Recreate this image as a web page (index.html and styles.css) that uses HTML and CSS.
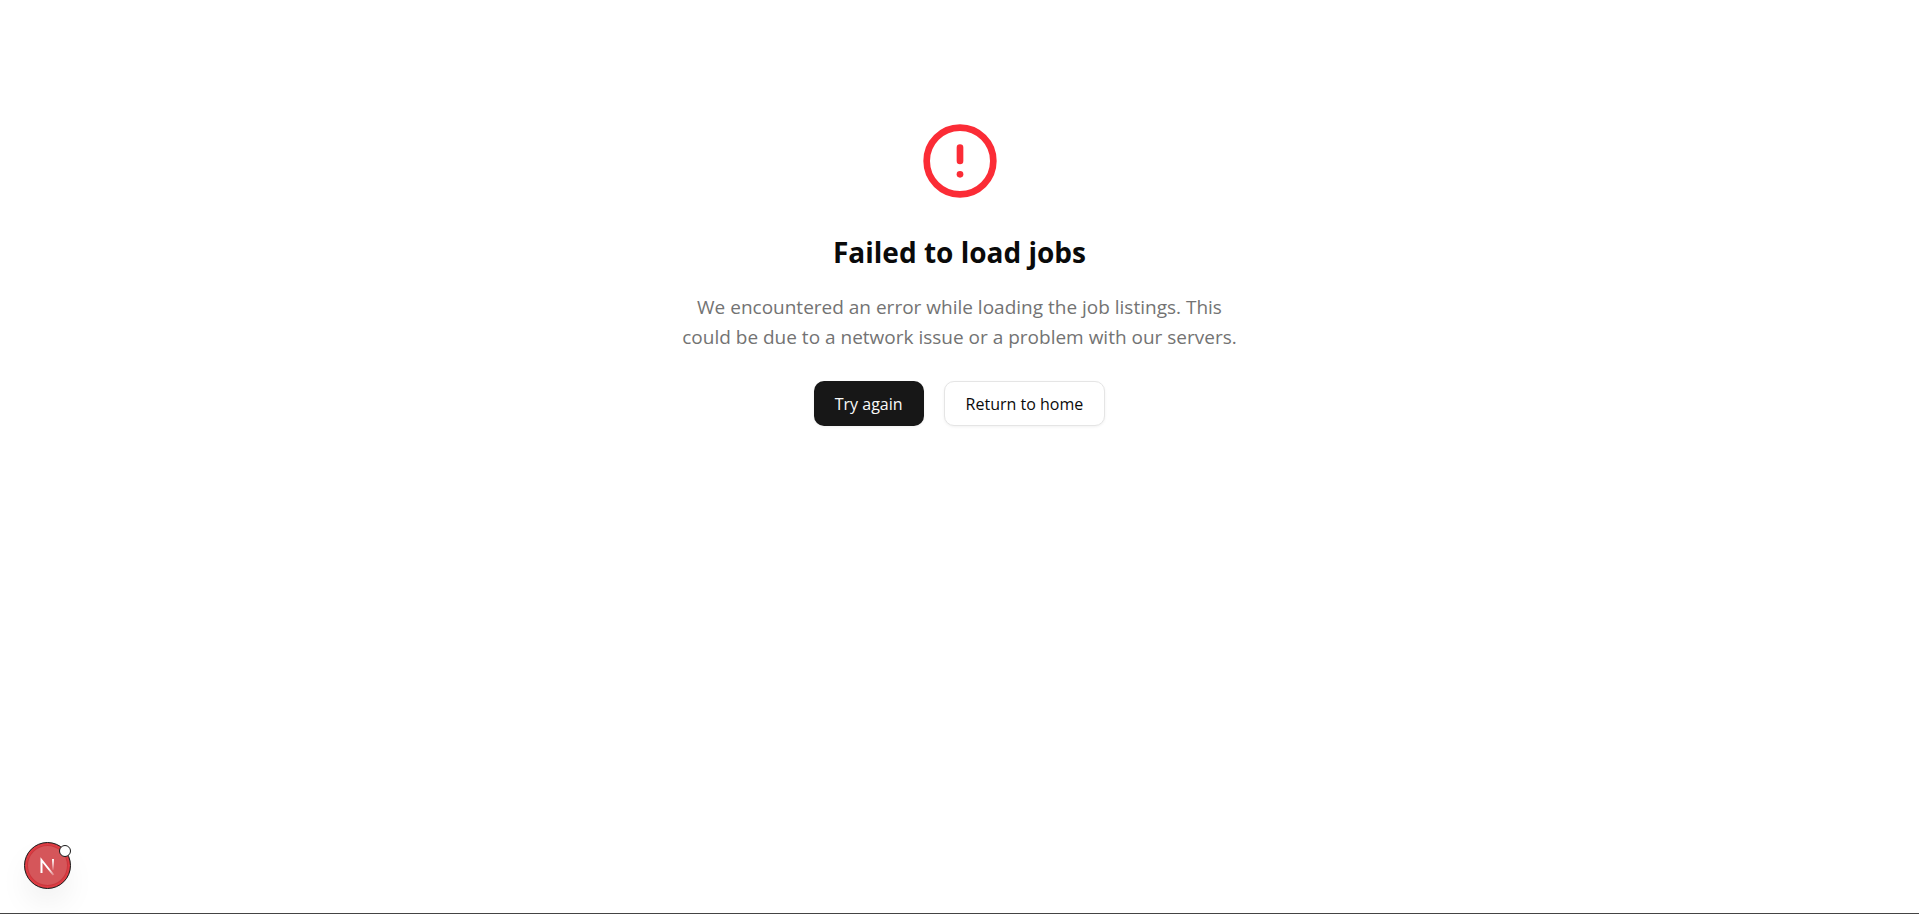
FILE: index.html
```html
<!DOCTYPE html>
<html lang="en">
<head>
<meta charset="utf-8">
<meta name="viewport" content="width=device-width, initial-scale=1">
<title>Failed to load jobs</title>
<link rel="stylesheet" href="styles.css">
</head>
<body>
<main class="error">
  <svg class="error-icon" viewBox="0 0 24 24" aria-hidden="true">
    <circle cx="12" cy="12" r="10"/>
    <line x1="12" y1="8" x2="12" y2="12"/>
    <line x1="12" y1="16" x2="12.01" y2="16"/>
  </svg>
  <h1 class="error-title">Failed to load jobs</h1>
  <p class="error-text">We encountered an error while loading the job listings. This could be due to a network issue or a problem with our servers.</p>
  <div class="actions">
    <button class="button button-primary" type="button">Try again</button>
    <a class="button button-outline" href="/">Return to home</a>
  </div>
</main>
<button class="dev-badge" type="button" aria-label="Open developer tools">
  <svg class="dev-logo" viewBox="0 0 45 45" fill="none" aria-hidden="true">
    <defs>
      <linearGradient id="fade-diagonal" gradientUnits="userSpaceOnUse" x1="24" y1="26" x2="30" y2="34"><stop stop-color="#fff"/><stop offset="1" stop-color="#fff" stop-opacity="0"/></linearGradient>
      <linearGradient id="fade-stem" gradientUnits="userSpaceOnUse" x1="28" y1="16" x2="28" y2="28"><stop stop-color="#fff"/><stop offset="1" stop-color="#fff" stop-opacity="0"/></linearGradient>
    </defs>
    <path d="M16.500 30V17L28.500 32" stroke="url(#fade-diagonal)" stroke-width="2"/>
    <path d="M28 16V27" stroke="url(#fade-stem)" stroke-width="2"/>
  </svg>
  <span class="dev-dot"></span>
</button>
</body>
</html>
```
FILE: styles.css
```css
* { box-sizing: border-box; }
body {
  margin: 0;
  min-height: 100vh;
  background: #fff;
  color: #0a0a0a;
  border-bottom: 1px solid #444;
  font-family: "Segoe UI", "Open Sans", "Noto Sans", sans-serif;
}
.error {
  display: flex;
  flex-direction: column;
  align-items: center;
  padding: 121px 20px 80px;
  text-align: center;
}
.error-icon {
  width: 80px;
  height: 80px;
  margin-bottom: 31px;
  fill: none;
  stroke: #fb2c36;
  stroke-width: 2;
  stroke-linecap: round;
}
.error-title {
  margin: 0 0 20px;
  font-size: 28px;
  line-height: 40px;
  font-weight: 700;
}
.error-text {
  max-width: 560px;
  margin: 0 0 29px;
  color: #737373;
  font-size: 19px;
  line-height: 30px;
}
.actions { display: flex; gap: 20px; }
.button {
  display: inline-flex;
  align-items: center;
  justify-content: center;
  height: 45px;
  padding: 0 21px;
  border: 0;
  border-radius: 10px;
  font: inherit;
  font-size: 16px;
  text-decoration: none;
  box-shadow: 0 1px 3px rgba(0, 0, 0, 0.06);
}
.button-primary { background: #171717; color: #fafafa; }
.button-outline { border: 1px solid #e5e5e5; background: #fff; color: #0a0a0a; }
.dev-badge {
  position: fixed;
  left: 24px;
  bottom: 25px;
  width: 47px;
  height: 47px;
  padding: 0;
  border: 1px solid #171717;
  border-radius: 50%;
  background: #d5565a;
  box-shadow: inset 0 0 0 2px #dd3c43, inset 0 0 0 3px #cb373d, 0 16px 32px -4px rgba(0, 0, 0, 0.08);
}
.dev-logo { display: block; width: 100%; height: 100%; }
.dev-dot {
  position: absolute;
  top: 2px;
  right: -1px;
  width: 12px;
  height: 12px;
  border: 1px solid #171717;
  border-radius: 50%;
  background: #fff;
}
```
